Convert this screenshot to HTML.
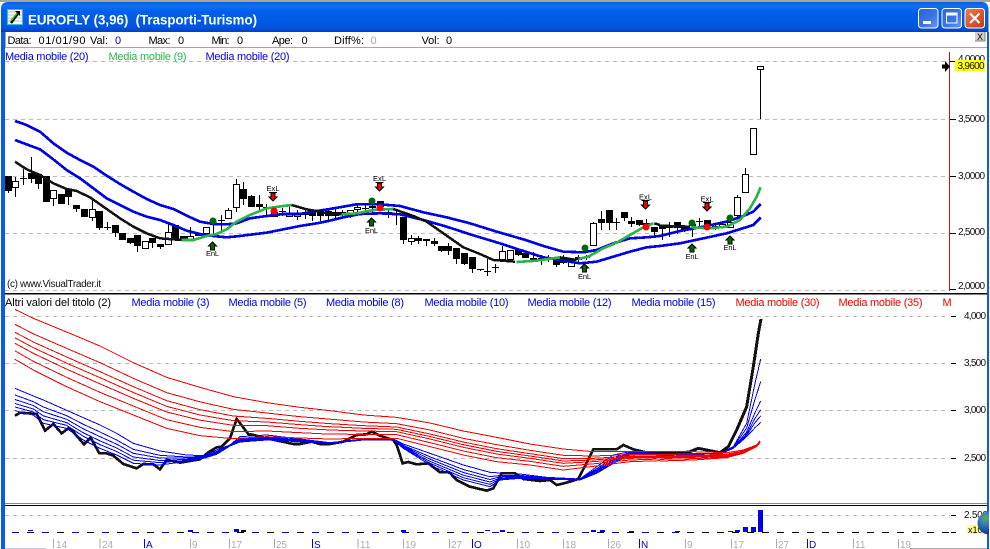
<!DOCTYPE html>
<html>
<head>
<meta charset="utf-8">
<title>EUROFLY</title>
<style>
html,body{margin:0;padding:0;background:#fff;width:990px;height:549px;overflow:hidden}
svg{display:block;position:absolute;left:0;top:0}
text{font-family:"Liberation Sans",Arial,sans-serif;font-size:11px}
.b{fill:#0000e6}
.g{fill:#2db34a}
.r{fill:#f00000}
.k{fill:#000}
.ax{font-size:10px;fill:#111}
.d{font-size:10px;fill:#aaa}
.dt{stroke:#aaa;stroke-width:1}
.db{font-size:10px;fill:#0000e6}
.dbt{stroke:#0000e6;stroke-width:1}
.sig{font-size:7.5px;fill:#000;text-anchor:middle}
.grid{stroke:#bbb;stroke-width:1;stroke-dasharray:4 4;fill:none}
</style>
</head>
<body>
<svg xmlns="http://www.w3.org/2000/svg" width="990" height="549" viewBox="0 0 990 549">
<defs>
<linearGradient id="tb" x1="0" y1="0" x2="0" y2="1">
<stop offset="0" stop-color="#0a5ce0"/><stop offset=".12" stop-color="#0f70f4"/><stop offset=".3" stop-color="#0060ea"/><stop offset=".85" stop-color="#0056e0"/><stop offset="1" stop-color="#0040c4"/>
</linearGradient>
<linearGradient id="bb" x1="0" y1="0" x2="1" y2="1">
<stop offset="0" stop-color="#2a62d8"/><stop offset=".6" stop-color="#3f76e6"/><stop offset="1" stop-color="#6a9cf4"/>
</linearGradient>
<linearGradient id="cb" x1="0" y1="0" x2="1" y2="1">
<stop offset="0" stop-color="#e8805c"/><stop offset=".5" stop-color="#dc5a30"/><stop offset="1" stop-color="#bf3a14"/>
</linearGradient>
<radialGradient id="gl" cx=".35" cy=".3" r=".8">
<stop offset="0" stop-color="#5fb04a"/><stop offset=".3" stop-color="#3a80b8"/><stop offset=".7" stop-color="#1848a8"/><stop offset="1" stop-color="#0a2a70"/>
</radialGradient>
</defs>

<rect width="990" height="549" fill="#fff"/>

<path class="grid" d="M5 61.5H948M5 119.5H948M5 176.5H948M5 233.5H948M5 290.5H948"/>
<path class="grid" d="M5 316.5H948M5 363.5H948M5 410.5H948M5 458.5H948"/>
<path class="grid" d="M5 515.5H950"/>

<!-- candles -->
<g shape-rendering="crispEdges">
<path stroke="#000" stroke-width="1" fill="none" d="M8.5 176V193M15.5 177V197M23.5 169V185M31.5 157V183M38.5 174V189M46.5 176V202M53.5 190V206M61.5 194V204M68.5 189V205M76.5 205V212M84.5 209V217M92.5 198V221M99.5 211V230M107.5 222V230M115.5 225V237M122.5 233V240M130.5 238V244M137.5 235V252M145.5 241V248M152.5 238V248M160.5 244V249M168.5 222V244M175.5 225V240M183.5 236V241M190.5 227V239M198.5 233V236M206.5 227V233M213.5 225V237M221.5 215V232M228.5 208V218M236.5 179V212M243.5 182V205M251.5 195V207M259.5 195V212M266.5 204V217M274.5 210V216M282.5 208V216M289.5 205V216M297.5 210V220M305.5 210V219M312.5 210V221M320.5 210V221M328.5 208V220M335.5 208V218M342.5 210V218M350.5 210V218M357.5 203V212M365.5 205V214M372.5 205V215M380.5 201V207M388.5 209V218M396.5 210V225M403.5 217V244M411.5 235V245M418.5 236V244M426.5 239V246M434.5 238V246M441.5 246V252M448.5 243V255M456.5 248V264M464.5 253V265M472.5 257V273M480.5 269V271M487.5 259V276M495.5 264V273M502.5 246V259M510.5 250V260M518.5 250V256M525.5 253V258M533.5 252V260M541.5 255V265M548.5 255V262M556.5 260V267M563.5 255V264M571.5 260V266M578.5 255V262M586.5 255V260M593.5 222V246M601.5 211V230M609.5 210V230M616.5 218V230M624.5 212V221M631.5 217V227M639.5 220V226M646.5 219V230M654.5 227V236M662.5 226V240M669.5 222V237M677.5 222V234M684.5 226V232M692.5 223V237M699.5 218V228M707.5 220V226M715.5 224V230M722.5 224V228M730.5 220V228M737.5 195V217M745.5 168V192M753.5 128V154M760.5 66V119"/>
<path fill="#000" d="M5 176h7v15h-7zM20 178h7v1h-7zM28 173h7v6h-7zM35 174h7v10h-7zM43 176h7v26h-7zM58 194h7v10h-7zM65 189h7v8h-7zM73 205h7v4h-7zM81 209h7v8h-7zM96 211h7v17h-7zM104 227h7v1h-7zM112 225h7v8h-7zM119 233h7v7h-7zM127 238h7v5h-7zM134 235h7v11h-7zM149 238h7v5h-7zM157 244h7v3h-7zM172 225h7v15h-7zM180 236h7v5h-7zM195 233h7v3h-7zM210 234h7v1h-7zM218 220h7v1h-7zM240 189h7v10h-7zM248 196h7v11h-7zM256 204h7v3h-7zM263 207h7v1h-7zM279 211h7v1h-7zM302 213h7v2h-7zM309 212h7v4h-7zM317 212h7v4h-7zM325 211h7v5h-7zM332 212h7v4h-7zM339 212h7v3h-7zM362 208h7v1h-7zM369 206h7v2h-7zM377 201h7v6h-7zM385 212h7v1h-7zM393 213h7v1h-7zM400 217h7v23h-7zM415 238h7v3h-7zM423 239h7v2h-7zM431 241h7v3h-7zM438 246h7v5h-7zM445 246h7v5h-7zM453 248h7v11h-7zM461 253h7v11h-7zM469 257h7v12h-7zM477 269h7v1h-7zM484 271h7v1h-7zM492 267h7v1h-7zM515 250h7v5h-7zM522 253h7v5h-7zM530 258h7v2h-7zM538 258h7v2h-7zM545 257h7v3h-7zM553 260h7v5h-7zM560 257h7v6h-7zM575 257h7v3h-7zM583 257h7v1h-7zM598 219h7v4h-7zM606 210h7v13h-7zM613 222h7v1h-7zM621 212h7v6h-7zM628 221h7v3h-7zM636 220h7v5h-7zM643 223h7v3h-7zM651 227h7v5h-7zM659 226h7v3h-7zM666 225h7v3h-7zM674 222h7v6h-7zM681 226h7v4h-7zM689 224h7v2h-7zM696 221h7v1h-7zM704 220h7v5h-7z"/>
<path fill="#fff" stroke="#000" stroke-width="1" d="M12.500 181.500h6v6h-6zM50.500 190.500h6v8h-6zM89.500 209.500h6v8h-6zM142.500 241.500h6v7h-6zM165.500 232.500h6v12h-6zM187.500 236.500h6v3h-6zM203.500 227.500h6v6h-6zM225.500 210.500h6v8h-6zM233.500 184.500h6v23h-6zM271.500 212.500h6v4h-6zM286.500 213.500h6v3h-6zM294.500 213.500h6v3h-6zM347.500 210.500h6v4h-6zM354.500 207.500h6v2h-6zM408.500 238.500h6v3h-6zM499.500 251.500h6v8h-6zM507.500 250.500h6v9h-6zM568.500 260.500h6v6h-6zM590.500 223.500h6v22h-6zM712.500 226.500h6v2h-6zM719.500 224.500h6v3h-6zM727.500 222.500h6v5h-6zM734.500 197.500h6v18h-6zM742.500 174.500h6v18h-6zM750.500 128.500h6v26h-6zM757.500 66.500h6v3h-6z"/>
</g>

<!-- main moving averages -->
<g shape-rendering="crispEdges" fill="none">
<g transform="translate(0,110) scale(.33333)" fill="none">
<polyline stroke="#0000e6" stroke-width="8" points="45,33 80,45 120,65 160,100 200,128 240,150 280,170 320,197 360,222 400,245 440,267 480,285 520,297 560,317 600,335 640,342 680,343 710,340 750,325 800,318 850,312 900,312 950,303 990,297"/>
<polyline stroke="#0000e6" stroke-width="8" points="45,90 85,105 120,118 160,148 200,180 240,205 280,235 320,265 360,285 400,305 440,320 480,330 520,345 560,362 600,372 640,378 680,382 720,378 760,373 800,368 850,358 900,348 950,340 990,332"/>
<polyline stroke="#111" stroke-width="7.5" points="45,155 80,178 120,195 160,220 200,237 230,243 270,262 320,297 360,325 400,350 440,370 480,385 545,390"/>
<polyline stroke="#2db34a" stroke-width="8" points="545,390 580,390 620,378 650,372 680,358 710,335 750,315 800,295 850,288 875,285"/>
<polyline stroke="#111" stroke-width="7.5" points="875,285 920,298 960,305 990,312"/>
</g>
<g transform="translate(330,110) scale(.33333)" fill="none">
<polyline stroke="#111" stroke-width="7.5" points="0,312 35,313"/>
<polyline stroke="#0000e6" stroke-width="8" points="0,297 40,290 80,283 150,283 210,288 280,307 350,322 420,340 500,365 580,388 640,408 700,425 760,427 800,420 850,400 900,385 950,382 990,378"/>
<polyline stroke="#0000e6" stroke-width="8" points="0,332 40,322 90,312 150,310 210,313 280,330 350,350 420,373 500,397 580,423 640,442 700,452 750,460 800,455 850,440 900,425 950,412 990,408"/>
<polyline stroke="#2db34a" stroke-width="8" points="35,313 80,310 130,300 190,297"/>
<polyline stroke="#111" stroke-width="7.5" points="190,297 250,318 290,335 340,370 400,412 450,432 490,450 555,455"/>
<polyline stroke="#2db34a" stroke-width="8" points="560,456 620,452 690,442"/>
<polyline stroke="#111" stroke-width="7.5" points="690,442 740,450"/>
<polyline stroke="#2db34a" stroke-width="8" points="745,447 775,440 820,415 860,398 900,375 940,352 970,340"/>
<polyline stroke="#111" stroke-width="7.5" points="973,340 990,345"/>
</g>
<g transform="translate(660,110) scale(.33333)" fill="none">
<polyline stroke="#0000e6" stroke-width="8" points="0,378 60,363 130,350 200,335 250,318 280,305 302,282"/>
<polyline stroke="#0000e6" stroke-width="8" points="0,408 60,400 130,385 200,370 280,345 302,323"/>
<polyline stroke="#111" stroke-width="7.5" points="0,347 90,350"/>
<polyline stroke="#2db34a" stroke-width="8" points="95,352 150,355 200,350 240,330 270,295 290,260 302,232"/>
</g>
</g>

<!-- dots -->
<g>
<circle cx="213" cy="221" r="3.500" fill="#006a00"/>
<circle cx="274" cy="211" r="3.500" fill="#f00"/>
<circle cx="372" cy="201" r="3.500" fill="#006a00"/>
<circle cx="380" cy="208" r="3.500" fill="#f00"/>
<circle cx="585" cy="248" r="3.500" fill="#006a00"/>
<circle cx="646" cy="227" r="3.500" fill="#f00"/>
<circle cx="692" cy="223" r="3.500" fill="#006a00"/>
<circle cx="707" cy="227" r="3.500" fill="#f00"/>
<circle cx="730" cy="218" r="3.500" fill="#006a00"/>
</g>

<!-- signal arrows -->
<g stroke="#000" stroke-width="1" fill="#006a00" shape-rendering="crispEdges">
<path d="M212.500 242l4 4h-2v4h-4v-4h-2z"/>
<path d="M371.500 218l4 4h-2v4h-4v-4h-2z"/>
<path d="M584.500 264l4 4h-2v4h-4v-4h-2z"/>
<path d="M692 244l4 4h-2v4h-4v-4h-2z"/>
<path d="M730 236l4 4h-2v4h-4v-4h-2z"/>
</g>
<g stroke="#000" stroke-width="1" fill="#f00000" shape-rendering="crispEdges">
<path d="M269 192.500h8M271 193h4v4h2l-4 4-4-4h2z"/>
<path d="M375.500 182.500h8M377.500 183h4v4h2l-4 4-4-4h2z"/>
<path d="M641.500 200.500h8M643.500 201h4v4h2l-4 4-4-4h2z"/>
<path d="M703 202.500h8M705 203h4v4h2l-4 4-4-4h2z"/>
</g>
<text class="sig" x="212.500" y="256" textLength="13">EnL</text>
<text class="sig" x="371.500" y="233" textLength="13">EnL</text>
<text class="sig" x="584.500" y="279" textLength="13">EnL</text>
<text class="sig" x="692" y="259" textLength="13">EnL</text>
<text class="sig" x="730" y="250" textLength="13">EnL</text>
<text class="sig" x="273" y="191" textLength="13">ExL</text>
<text class="sig" x="379.500" y="181" textLength="13">ExL</text>
<text class="sig" x="645.500" y="199.500" textLength="13">ExL</text>
<text class="sig" x="707" y="201.500" textLength="13">ExL</text>

<!-- lower panel: price line -->
<g shape-rendering="crispEdges" fill="none">
<g transform="translate(0,290) scale(.33333)" fill="none">
<polyline stroke="#111" stroke-width="8" points="45,377 60,368 110,372 122,395 135,422 160,402 185,430 205,415 215,420 252,463 272,443 298,490 320,490 340,497 370,522 410,535 430,522 460,523 480,538 500,510 520,513 540,518 600,508 625,487 650,472 665,470 690,445 710,387 745,432 760,435 800,445 880,462 900,462 935,455 960,462 990,462"/>
</g>
<g transform="translate(330,290) scale(.33333)" fill="none">
<polyline stroke="#111" stroke-width="8" points="0,462 40,455 80,435 110,433 125,425 150,437 190,450 200,465 218,520 235,516 260,523 295,520 330,547 358,547 380,570 420,590 470,602 490,595 515,550 555,550 580,567 630,573 660,570 680,585 710,578 745,567 790,478 860,478 880,465 910,478 940,485 960,490 990,490"/>
</g>
<g transform="translate(660,290) scale(.33333)" fill="none">
<polyline stroke="#111" stroke-width="9" points="0,490 30,488 60,490 90,485 115,475 140,480 180,488 205,470 230,420 260,350 280,230 295,130 303,87"/>
</g>
</g>

<!-- blue fan -->
<g shape-rendering="crispEdges" fill="none" stroke="#0000f0" stroke-width="3">
<g transform="translate(0,290) scale(.33333)">
<polyline points="45,295 100,318 130,330 200,361 250,383 300,405 350,430 400,460 480,483 560,495 610,497 650,480 690,465 720,440 800,435 990,458"/>
<polyline points="45,315 100,335 130,351 200,377 250,403 300,426 350,450 400,478 480,496 560,501 610,499.500 650,484 690,466 720,445 800,440 990,458.600"/>
<polyline points="45,328.500 100,346.500 130,365 200,388 250,416.500 300,440 350,462.500 400,490 480,504 560,504.500 610,501 650,486.500 690,466.500 720,448 800,442.500 990,459"/>
<polyline points="45,340.500 100,357 130,377.500 200,398 250,428.500 300,452.500 350,474 400,501 480,511.500 560,508 610,502.500 650,489 690,467 720,451 800,445 990,459.400"/>
<polyline points="45,351 100,366 130,389 200,406 250,439 300,464 350,484.500 400,510.500 480,518 560,511 610,504 650,491 690,467.500 720,453.500 800,447.500 990,459.700"/>
<polyline points="45,362 100,375 130,400 200,415 250,450 300,475 350,495 400,520 480,525 560,514 610,505 650,493 690,468 720,456 800,450 990,460"/>
</g>
<g transform="translate(330,290) scale(.33333)">
<polyline points="0,458 100,447 190,447 220,462 300,490 400,525 480,547 510,549 570,552 650,562 750,567 800,530 850,495 900,485 990,490"/>
<polyline points="0,458.600 100,448 190,448 220,466 300,500.500 400,538.500 480,560 510,556.500 570,556 650,564 750,568 800,536 850,502.500 900,488 990,490"/>
<polyline points="0,459 100,448.500 190,448.500 220,468.500 300,507.500 400,547.500 480,568.500 510,560.500 570,558.500 650,565 750,568.500 800,540 850,507.500 900,490 990,490"/>
<polyline points="0,459.400 100,449 190,449 220,471 300,514 400,555.500 480,576 510,564 570,561 650,566 750,569 800,543.500 850,512 900,492 990,490"/>
<polyline points="0,459.700 100,449.500 190,449.500 220,473 300,519.500 400,563 480,583 510,567 570,563 650,567 750,569.500 800,547 850,516 900,493.500 990,490"/>
<polyline points="0,460 100,450 190,450 220,475 300,525 400,570 480,590 510,570 570,565 650,568 750,570 800,550 850,520 900,495 990,490"/>
</g>
<g transform="translate(660,290) scale(.33333)">
<polyline points="0,490 180,490 220,470 260,400 285,280 302,207"/>
<polyline points="0,491 180,490.500 220,471 260,414 285,328 302,275"/>
<polyline points="0,492 180,491 220,473 260,426 285,368 302,333"/>
<polyline points="0,493 180,491.500 220,474 260,432 285,385 302,360"/>
<polyline points="0,494 180,492 220,474.500 260,436 285,398 302,378"/>
<polyline points="0,495 180,492 220,475 260,440 285,413 302,397"/>
</g>
</g>

<!-- red fan -->
<g shape-rendering="crispEdges" fill="none" stroke="#f00000" stroke-width="3">
<g transform="translate(0,290) scale(.33333)">
<polyline points="45,58 100,85 200,126 300,168 400,218 500,262 600,292 700,320 800,338 900,352 990,362"/>
<polyline points="45,103 100,131.500 200,175 300,218 400,265 500,308 600,335.500 700,358 800,369 900,380 990,387.500"/>
<polyline points="45,127 100,156 200,201 300,245 400,290 500,332 600,359 700,378 800,385 900,394 990,401"/>
<polyline points="45,143.500 100,173 200,219.500 300,263 400,307.500 500,349 600,375 700,392 800,396 900,404 990,410.500"/>
<polyline points="45,160 100,190 200,237.500 300,281.500 400,325 500,366 600,390.500 700,406 800,407 900,415 990,420"/>
<polyline points="45,182.500 100,214 200,262 300,307 400,348 500,389 600,412 700,425 800,423 900,428 990,432.500"/>
<polyline points="45,208 100,240 200,290 300,335 400,375 500,415 600,437 700,446 800,440 900,444 990,447"/>
</g>
<g transform="translate(330,290) scale(.33333)">
<polyline points="0,362 100,375 200,382 300,399 400,423 500,442 600,462 700,477 790,485 900,485 990,485"/>
<polyline points="0,387.500 100,396 200,401 300,420 400,445 500,464 600,481 700,496 790,498 900,494 990,493"/>
<polyline points="0,401 100,407 200,411 300,432 400,456 500,476 600,491 700,506 790,505 900,499 990,497"/>
<polyline points="0,410 100,415 200,418 300,439.500 400,464 500,484 600,498 700,513 790,510 900,502 990,500"/>
<polyline points="0,420 100,423 200,425 300,447 400,472 500,492 600,505 700,520 790,515 900,505 990,503"/>
<polyline points="0,432.500 100,433 200,434 300,458 400,483 500,503 600,514 700,529 790,521.500 900,510 990,507"/>
<polyline points="0,447 100,445 200,445 300,470 400,495 500,515 600,525 700,540 790,529 900,515 990,512"/>
</g>
<g transform="translate(660,290) scale(.33333)">
<polyline points="0,485 100,485 200,488 250,480 290,465 300,452"/>
<polyline points="0,493 100,492.500 200,492.500 250,483 290,466.500 300,454"/>
<polyline points="0,498 100,496.500 200,495 250,484.500 290,467 300,455"/>
<polyline points="0,501 100,499 200,496.500 250,485.500 290,468 300,455.500"/>
<polyline points="0,504 100,502 200,498 250,487 290,468.500 300,456"/>
<polyline points="0,508 100,506 200,500.500 250,488.500 290,469 300,457"/>
<polyline points="0,513 100,510 200,503 250,490 290,470 300,458"/>
</g>
</g>

<!-- title bar -->
<rect x="0" y="0" width="990" height="2" fill="#a8a69c"/>
<path d="M1 32V9Q1 2 8 2H982Q988 2 988.500 9V32z" fill="url(#tb)"/>
<rect x="1" y="32" width="4" height="517" fill="#0a5af0"/>
<rect x="987" y="32" width="2" height="517" fill="#0a5af0"/>

<!-- icon -->
<g shape-rendering="crispEdges">
<rect x="7.500" y="9.500" width="15" height="15" fill="#fff" stroke="#20c8d8"/>
<path d="M8 12h14M8 15h14M8 18h14M8 21h14" stroke="#bbb"/>
</g>
<path d="M11 23L19 12" stroke="#000" stroke-width="2.500" fill="none"/>
<path d="M11 21L18 12" stroke="#18c020" stroke-width="1.500" fill="none"/>
<path d="M15 11h5v5z" fill="#000"/>

<text x="28" y="24.500" fill="#fff" style="font-size:14px;font-weight:bold" textLength="229" lengthAdjust="spacingAndGlyphs" xml:space="preserve">EUROFLY (3,96)  (Trasporti-Turismo)</text>

<!-- window buttons -->
<g>
<rect x="918.500" y="8.500" width="19.500" height="19.500" rx="3" fill="url(#bb)" stroke="#fff"/>
<rect x="923" y="21" width="8" height="3" fill="#fff"/>
<rect x="942" y="8.500" width="19.500" height="19.500" rx="3" fill="url(#bb)" stroke="#fff"/>
<path d="M946.500 13h10.500v10h-10.500z" fill="none" stroke="#fff" stroke-width="1"/>
<rect x="946" y="13" width="11" height="2.500" fill="#fff"/>
<rect x="965" y="8.500" width="19.500" height="19.500" rx="3" fill="url(#cb)" stroke="#fff"/>
<path d="M970 13.500l9.500 9.500M979.500 13.500l-9.500 9.500" stroke="#fff" stroke-width="2" fill="none"/>
</g>

<!-- info row -->
<rect x="5" y="32" width="982" height="15" fill="#fff"/>
<rect x="5" y="32" width="1" height="16" fill="#aaa"/>
<rect x="5" y="47" width="982" height="1" fill="#aaa69c"/>
<text class="k" x="7.500" y="44" textLength="24">Data:</text>
<text class="k" x="38.500" y="44" textLength="47">01/01/90</text>
<text class="k" x="90" y="44" textLength="18">Val:</text>
<text class="b" x="115" y="44">0</text>
<text class="k" x="148.500" y="44" textLength="22">Max:</text>
<text class="k" x="178" y="44">0</text>
<text class="k" x="211.500" y="44" textLength="18">Min:</text>
<text class="k" x="237" y="44">0</text>
<text class="k" x="272" y="44" textLength="21">Ape:</text>
<text class="k" x="301.500" y="44">0</text>
<text class="k" x="334" y="44" textLength="30">Diff%:</text>
<text x="370.500" y="44" fill="#aaa">0</text>
<text class="k" x="421.500" y="44" textLength="18">Vol:</text>
<text class="k" x="446" y="44">0</text>
<rect x="975" y="32" width="10" height="9" fill="#d4d0c8"/>
<path d="M975 41h10V32" stroke="#808080" fill="none"/>
<text x="977" y="40" style="font-size:9px" fill="#000">X</text>

<!-- main labels -->
<text class="b" x="5" y="60" textLength="83.500">Media mobile (20)</text>
<text class="g" x="108.500" y="60" textLength="78">Media mobile (9)</text>
<text class="b" x="205.500" y="60" textLength="84">Media mobile (20)</text>
<text x="7" y="287" fill="#111" style="font-size:10px" textLength="94">(c) www.VisualTrader.it</text>

<!-- axis main -->
<rect x="949" y="52" width="1" height="239" fill="#d01010"/>
<path d="M950 61.500h6M950 119.500h6M950 176.500h6M950 233.500h6M950 289.500h6" stroke="#000" fill="none" shape-rendering="crispEdges"/>
<text class="ax" x="958" y="122" textLength="27">3,5000</text>
<text class="ax" x="958" y="179" textLength="27">3,0000</text>
<text class="ax" x="958" y="235" textLength="27">2,5000</text>
<text class="ax" x="958" y="289" textLength="27">2,0000</text>
<text class="ax" x="958" y="62" textLength="27">4,0000</text>
<rect x="955" y="60" width="30" height="11" fill="#ffff00"/>
<text class="ax" x="957.500" y="69" fill="#000" textLength="27">3,9600</text>
<path d="M942 64.500h3v-3.500l5 5.500-5 5.500v-3.500h-3z" fill="#000"/>

<!-- separator -->
<rect x="5" y="293" width="982" height="1.500" fill="#000"/>

<!-- lower labels -->
<text class="k" x="5" y="306" textLength="106">Altri valori del titolo (2)</text>
<text class="b" x="131.500" y="306" textLength="78">Media mobile (3)</text>
<text class="b" x="228.500" y="306" textLength="78">Media mobile (5)</text>
<text class="b" x="326" y="306" textLength="78">Media mobile (8)</text>
<text class="b" x="424.500" y="306" textLength="84">Media mobile (10)</text>
<text class="b" x="527.500" y="306" textLength="84">Media mobile (12)</text>
<text class="b" x="631.500" y="306" textLength="84">Media mobile (15)</text>
<text class="r" x="735.500" y="306" textLength="84">Media mobile (30)</text>
<text class="r" x="838.500" y="306" textLength="84">Media mobile (35)</text>
<text class="r" x="942.500" y="306" textLength="9">M</text>

<path d="M951 316.500h5M951 363.500h5M951 410.500h5M951 458.500h5" stroke="#000" fill="none" shape-rendering="crispEdges"/>
<text class="ax" x="964" y="319" textLength="22">4,000</text>
<text class="ax" x="964" y="366" textLength="22">3,500</text>
<text class="ax" x="964" y="413" textLength="22">3,000</text>
<text class="ax" x="964" y="461" textLength="22">2,500</text>

<!-- volume panel -->
<rect x="5" y="503" width="982" height="1" fill="#888"/>
<rect x="5" y="505" width="982" height="1" fill="#000"/>
<path d="M12 532.500H950" stroke="#000" stroke-dasharray="7 8" fill="none" shape-rendering="crispEdges"/>
<path d="M12 532.500H700" stroke="#0000e6" stroke-dasharray="5 25" fill="none" shape-rendering="crispEdges"/>
<g fill="#0000e6" shape-rendering="crispEdges">
<rect x="28" y="530" width="5" height="1"/>
<rect x="188" y="530" width="5" height="2"/>
<rect x="234" y="529" width="5" height="3"/>
<rect x="241" y="530" width="5" height="2" fill="#000"/>
<rect x="401" y="530" width="5" height="2"/>
<rect x="485" y="530" width="5" height="1"/>
<rect x="500" y="530" width="5" height="2"/>
<rect x="591" y="530" width="5" height="2"/>
<rect x="600" y="530" width="5" height="2"/>
<rect x="629" y="531" width="5" height="1"/>
<rect x="675" y="531" width="5" height="1"/>
<rect x="728" y="531" width="5" height="1"/>
<rect x="735" y="530" width="5" height="2"/>
<rect x="743" y="527" width="5" height="5"/>
<rect x="751" y="527" width="5" height="5"/>
<rect x="758" y="510" width="5" height="22"/>
</g>
<path d="M951 515.500h5M951 532.500h5" stroke="#000" fill="none" shape-rendering="crispEdges"/>
<text class="ax" x="964" y="518" textLength="24">2.500</text>
<rect x="967" y="525" width="18" height="9" fill="#ffff80"/>
<text x="968" y="533" style="font-size:9px" fill="#000">x100</text>
<circle cx="989" cy="523" r="11.500" fill="url(#gl)"/>
<rect x="989" y="495" width="1" height="54" fill="#fff"/>

<!-- dates -->
<g shape-rendering="crispEdges">
<path class="dt" d="M53.500 539v9M100 539v9M190.500 539v9M229.500 539v9M274.500 539v9M358 539v9M403.500 539v9M449.500 539v9M517.500 539v9M563.500 539v9M608.500 539v9M685.500 539v9M731.500 539v9M776.500 539v9M853.500 539v9M898.500 539v9"/>
<path class="dbt" d="M144.500 539v9M312.500 539v9M472.500 539v9M639.500 539v9M807.500 539v9"/>
</g>
<text class="d" x="56" y="548">14</text>
<text class="d" x="102" y="548">24</text>
<text class="db" x="146" y="548">A</text>
<text class="d" x="192" y="548">9</text>
<text class="d" x="231" y="548">17</text>
<text class="d" x="276" y="548">25</text>
<text class="db" x="314" y="548">S</text>
<text class="d" x="360" y="548">11</text>
<text class="d" x="405" y="548">19</text>
<text class="d" x="451" y="548">27</text>
<text class="db" x="474" y="548">O</text>
<text class="d" x="519" y="548">10</text>
<text class="d" x="565" y="548">18</text>
<text class="d" x="610" y="548">26</text>
<text class="db" x="641" y="548">N</text>
<text class="d" x="687" y="548">9</text>
<text class="d" x="733" y="548">17</text>
<text class="d" x="778" y="548">27</text>
<text class="db" x="809" y="548">D</text>
<text class="d" x="855" y="548">11</text>
<text class="d" x="900" y="548">19</text>
<rect x="5" y="548" width="41" height="1" fill="#c8c8e8"/>
<rect x="910" y="548" width="77" height="1" fill="#aaa"/>
</svg>
</body>
</html>
